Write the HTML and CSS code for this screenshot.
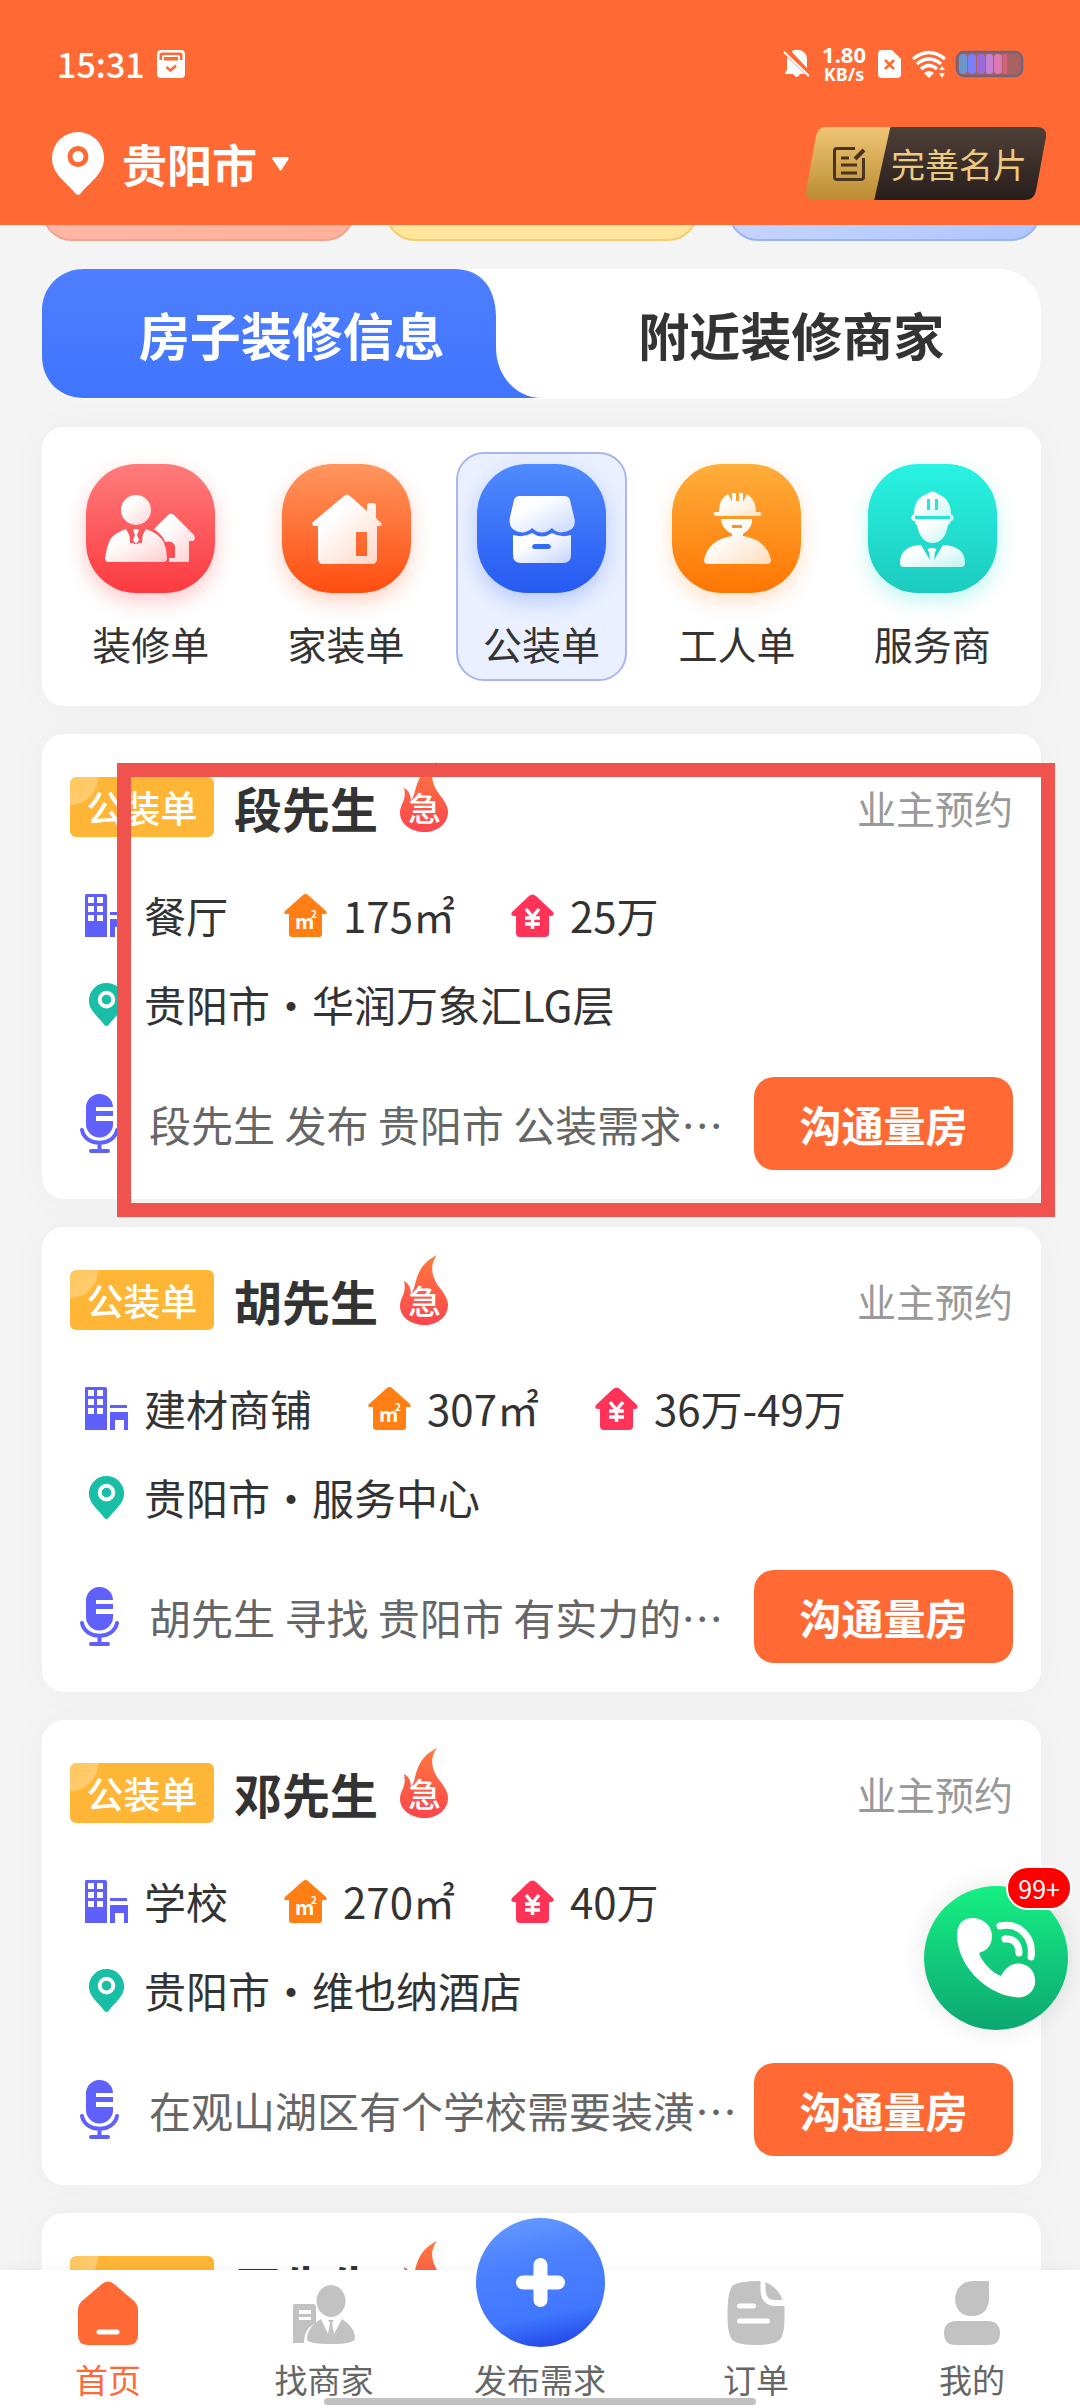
FILE: index.html
```html
<!DOCTYPE html>
<html lang="zh-CN">
<head>
<meta charset="utf-8">
<meta name="viewport" content="width=device-width, initial-scale=1">
<title>首页</title>
<link rel="stylesheet" href="styles.css">
</head>
<body>
<svg class="sprite" aria-hidden="true">
  <defs>
    <linearGradient id="g-red" x1="0" y1="0" x2="0" y2="1"><stop offset="0" stop-color="#ff7c7c"/><stop offset="1" stop-color="#fb3a40"/></linearGradient>
    <linearGradient id="g-orange" x1="0" y1="0" x2="0" y2="1"><stop offset="0" stop-color="#ff965f"/><stop offset="1" stop-color="#ff4d10"/></linearGradient>
    <linearGradient id="g-blue" x1="0" y1="0" x2="0" y2="1"><stop offset="0" stop-color="#4f8aff"/><stop offset="1" stop-color="#265af2"/></linearGradient>
    <linearGradient id="g-amber" x1="0" y1="0" x2="0" y2="1"><stop offset="0" stop-color="#ffae3b"/><stop offset="1" stop-color="#ff7603"/></linearGradient>
    <linearGradient id="g-teal" x1="0" y1="0" x2="0" y2="1"><stop offset="0" stop-color="#29f3e3"/><stop offset="1" stop-color="#1ccbbf"/></linearGradient>
    <linearGradient id="g-flame" x1="0" y1="0" x2="0" y2="1"><stop offset="0" stop-color="#ff7a3d"/><stop offset="1" stop-color="#fb454e"/></linearGradient>
    <linearGradient id="g-tab" x1="0" y1="0" x2="0" y2="1"><stop offset="0" stop-color="#4f7fff"/><stop offset="1" stop-color="#3f74fe"/></linearGradient>
    <linearGradient id="g-glyph" x1="0" y1="0" x2="1" y2="1"><stop offset=".3" stop-color="#fff"/><stop offset="1" stop-color="#fff" stop-opacity=".72"/></linearGradient>
  </defs>
  <symbol id="building" viewBox="0 0 43 43">
    <path fill="#5f5ffb" fill-rule="evenodd" d="M1 0H20Q22 0 22 2V43H0V2Q0 0 1 0ZM3 3V9H9V3ZM12 3V9H18V3ZM3 12V18H9V12ZM12 12V18H18V12ZM3 21V27H9V21ZM12 21V27H18V21ZM25 18H42V21H25ZM25 25H43V43H39V33H30V43H25Z"/>
  </symbol>
  <symbol id="area" viewBox="0 0 43 43">
    <path fill="#ff7f14" d="M19 1Q21.500-1 24 1L42 17Q44 20 41 20H38V40Q38 43 35 43H8Q5 43 5 40V20H2Q-1 20 1 17Z"/>
    <text x="11" y="35" font-size="20" font-weight="700" fill="#fff">m</text><text x="27" y="24" font-size="10" font-weight="700" fill="#fff">2</text>
  </symbol>
  <symbol id="budget" viewBox="0 0 43 43">
    <path fill="#ff3358" d="M18 2Q21.500-1 25 2L42 18Q44 22 40 22H38V39Q38 43 34 43H9Q5 43 5 39V22H3Q-1 22 1 18Z"/>
    <path stroke="#fff" stroke-width="3.500" fill="none" d="M15 15L21.500 23L28 15M14 24H29M14 30H29M21.500 23V35"/>
  </symbol>
  <symbol id="pin" viewBox="0 0 36 44">
    <path fill="#18bea6" fill-rule="evenodd" d="M18 0A18 18 0 0 1 36 18C36 28 27 34 20 43Q18 45 16 43C9 34 0 28 0 18A18 18 0 0 1 18 0ZM18 8A9 9 0 1 0 18 26A9 9 0 1 0 18 8ZM18 12A5 5 0 1 1 18 22A5 5 0 1 1 18 12Z"/>
  </symbol>
  <symbol id="mic" viewBox="0 0 39 59">
    <path fill="#6060fb" d="M6 14A13.500 13.500 0 0 1 33 13H16V17H33V22H16V27H33V30A13.500 13.500 0 0 1 6 30Z"/>
    <path fill="none" stroke="#6060fb" stroke-width="4" stroke-linecap="round" d="M2 36C5 53 34 53 37 36M19.500 49V55M11 57H28"/>
  </symbol>
  <symbol id="flame" viewBox="0 0 49 70">
    <path fill="url(#g-flame)" d="M37 0C30 9 31 19 37 29C43 37 48 43 48 50C48 62 37 70 25 70C11 70 0 62 0 51C0 42 7 39 4 26C9 28 11 34 11 39C18 30 13 12 37 0Z"/>
    <text x="8" y="59" font-size="33" font-weight="500" fill="#fff">急</text>
  </symbol>
</svg>

<div class="app">
  <header class="header">
    <div class="status">
      <span class="clock">15:31</span>
      <svg class="st-app" viewBox="0 0 28 28"><path fill="#fff" fill-rule="evenodd" d="M4 0H24Q28 0 28 4V24Q28 28 24 28H4Q0 28 0 24V4Q0 0 4 0ZM2.500 10H5V7Q5 5 7 5H21Q23 5 23 7V10H25.500V5Q25.500 2.500 23 2.500H5Q2.500 2.500 2.500 5ZM7 10.500H21V7H7Z"/><path d="M9.500 17L13.500 20.500L19 15.500" fill="none" stroke="#ff6a34" stroke-width="2.500"/></svg>
      <span class="spacer"></span>
      <svg class="st-bell" viewBox="0 0 26 28"><path fill="#fff" d="M8 1C14-2 23 1 23 9V18L8 2ZM3 7L21 24H16Q13 30 9 24H1Q1 22 3 20Z"/><path stroke="#fff" stroke-width="2" d="M0 2L25 26"/></svg>
      <span class="speed"><b>1.80</b><small>KB/s</small></span>
      <svg class="st-sim" viewBox="0 0 23 28"><path fill="#fff" d="M4 0H14L23 9V24Q23 28 19 28H4Q0 28 0 24V4Q0 0 4 0Z"/><path stroke="#ff6a34" stroke-width="2.500" d="M7 10L16 19M16 10L7 19"/></svg>
      <svg class="st-wifi" viewBox="0 0 34 27"><path fill="none" stroke="#fff" stroke-width="3.500" d="M1 8Q17-5 33 8M5 13Q17 3 29 13M9 18Q17 11 25 18"/><path fill="#fff" d="M12 22Q17 18 22 22L17 27ZM27 19L30 15L33 19ZM27 22L30 27L33 22Z"/></svg>
      <svg class="st-bat" viewBox="0 0 67 26"><rect x="1" y="1" width="65" height="24" rx="7" fill="#a9625f" stroke="#73647c" stroke-width="2.500"/><rect x="3" y="3" width="8" height="20" rx="4" fill="#6c96d0"/><rect x="12" y="3" width="8" height="20" rx="4" fill="#7a80ff"/><rect x="21" y="3" width="8" height="20" rx="4" fill="#9b6bdb"/><rect x="30" y="3" width="7" height="20" rx="3" fill="#c481d0"/><rect x="38" y="3" width="8" height="20" rx="4" fill="#df79b4"/><path fill="#d7607c" d="M47 3H51V23H47Z"/></svg>
    </div>
    <div class="topbar">
      <button class="city" type="button">
        <svg class="city-pin" viewBox="0 0 52 63"><path fill="#fff" fill-rule="evenodd" d="M26 0A26 26 0 0 1 52 26C52 42 38 50 29 61Q26 65 23 61C14 50 0 42 0 26A26 26 0 0 1 26 0ZM26 14A10.500 10.500 0 1 0 26 35A10.500 10.500 0 1 0 26 14Z"/><circle cx="26" cy="24.500" r="5.500" fill="#fff"/></svg>
        贵阳市
        <svg class="caret" viewBox="0 0 17 14"><path fill="#fff" d="M2 0H15Q18 0 16 3L10 12Q8.500 15 7 12L1 3Q-1 0 2 0Z"/></svg>
      </button>
      <button class="profile" type="button">
        <svg class="profile-bg" viewBox="0 0 239 73" preserveAspectRatio="none" aria-hidden="true"><defs><linearGradient id="pg" x1="0" y1="0" x2="0" y2="1"><stop offset="0" stop-color="#efc576"/><stop offset="1" stop-color="#bb8c32"/></linearGradient><linearGradient id="pd" x1="0" y1="0" x2="0" y2="1"><stop offset="0" stop-color="#503f38"/><stop offset="1" stop-color="#271e1c"/></linearGradient></defs><path fill="url(#pg)" d="M20 0H86L70 73H8Q-1 73 0 64L10 9Q12 0 20 0Z"/><path fill="url(#pd)" d="M84 0H230Q240 0 239 10L229 64Q227 73 218 73H68Z"/></svg>
        <svg class="profile-icon" viewBox="0 0 32 34"><path fill="none" stroke="#49351f" stroke-width="3" d="M22 1.500H4Q1.500 1.500 1.500 4V30Q1.500 32.500 4 32.500H28Q30.500 32.500 30.500 30V11M8 11H16M8 18H24M8 26H24"/><path stroke="#49351f" stroke-width="4" d="M22 12L31 3"/></svg>
        完善名片
      </button>
    </div>
  </header>

  <main class="content">
    <div class="promos"><div class="promo promo-red"></div><div class="promo promo-yellow"></div><div class="promo promo-blue"></div></div>

    <div class="tabs">
      <svg class="tab-bg" viewBox="0 0 999 130" preserveAspectRatio="none" aria-hidden="true"><path fill="url(#g-tab)" d="M42 0H412C440 0 454 20 454 48V78C454 108 475 129 500 129H42C18 129 0 112 0 87V42C0 18 18 0 42 0Z"/></svg>
      <button class="tab tab-active" type="button">房子装修信息</button>
      <button class="tab" type="button">附近装修商家</button>
    </div>

    <nav class="cats">
      <a class="cat" href="#renovate"><svg class="cat-icon cat-red" viewBox="0 0 129 129"><rect width="129" height="129" rx="50" fill="url(#g-red)"/><g fill="url(#g-glyph)"><path d="M68 65L82 51Q85 48 88 51L108 71Q110 75 107 77H103V98H83V94H89V82Q87 76 79 78Q77 71 68 65Z"/><circle cx="50" cy="46" r="15"/><path d="M40 65L48 80H52L60 65Q74 70 78 79Q81 86 81 94Q81 98 77 98H23Q19 98 19 94Q21 82 24 76Q28 69 40 65Z"/></g><path fill="#f9585c" d="M43 65H57L56 79H53L51 70H49L47 79H44Z"/><path fill="#fff" d="M47 66Q50 64 53 66L51 71L53 76L50 80L47 76L49 71Z"/></svg>装修单</a>
      <a class="cat" href="#home"><svg class="cat-icon cat-orange" viewBox="0 0 129 129"><rect width="129" height="129" rx="50" fill="url(#g-orange)"/><path fill="url(#g-glyph)" fill-rule="evenodd" d="M62 32Q65 29 68 32L85 47V42Q85 39 88 39H91Q94 39 94 42V54L100 60Q100 62 98 62H95V95Q95 100 90 100H41Q36 100 36 95V62H32Q29 61 31 58ZM74 68V92H85V68Z"/></svg>家装单</a>
      <a class="cat cat-active" href="#commercial" aria-current="true"><svg class="cat-icon cat-blue" viewBox="0 0 129 129"><rect width="129" height="129" rx="50" fill="url(#g-blue)"/><path fill="url(#g-glyph)" d="M43 32H87Q92 32 93 36L97 53Q100 64 91 67Q81 71 75 64Q65 73 55 64Q48 71 39 67Q31 64 33 53L37 36Q38 32 43 32Z"/><path fill="url(#g-glyph)" fill-rule="evenodd" d="M36 71Q47 74 55 69Q65 76 75 69Q84 74 94 71V91Q94 99 86 99H44Q36 99 36 91ZM57 80Q53 83 57 85H72Q76 83 72 80Z"/></svg>公装单</a>
      <a class="cat" href="#worker"><svg class="cat-icon cat-amber" viewBox="0 0 129 129"><rect width="129" height="129" rx="50" fill="url(#g-amber)"/><g fill="url(#g-glyph)"><path d="M47 48Q47 34 56 30L60 38V29H64V37H67V29H71V38L75 30Q84 36 84 48H88Q91 50 88 52H43Q40 50 43 48Z"/><path fill-rule="evenodd" d="M49 55H80Q81 64 71 70V72Q95 76 99 96Q99 100 95 100H36Q32 100 32 96Q36 76 60 72V70Q49 64 49 55ZM60 61V64H70V61Z"/></g></svg>工人单</a>
      <a class="cat" href="#provider"><svg class="cat-icon cat-teal" viewBox="0 0 129 129"><rect width="129" height="129" rx="50" fill="url(#g-teal)"/><g fill="url(#g-glyph)"><path fill-rule="evenodd" d="M46 50Q46 34 59 30Q64 25 70 30Q83 35 83 50Q88 53 84 57H82V52H47V57H45Q41 53 46 50ZM59 35V46H62V35ZM67 35V46H70V35Z"/><path d="M47 55H82Q84 58 80 61Q77 79 64 79Q52 78 49 61Q46 59 47 55Z"/><path d="M53 81L62 96L61 88Q58 85 62 84H66Q70 85 67 88L66 96L75 81Q97 82 97 99Q97 103 93 103H36Q32 103 32 99Q32 82 53 81Z"/></g></svg>服务商</a>
    </nav>

    <article class="lead">
      <div class="lead-head"><span class="tag">公装单</span><h2>段先生</h2><svg class="flame"><use href="#flame"/></svg><span class="source">业主预约</span></div>
      <div class="facts">
        <span class="fact"><svg class="ic"><use href="#building"/></svg>餐厅</span>
        <span class="fact"><svg class="ic"><use href="#area"/></svg>175㎡</span>
        <span class="fact"><svg class="ic"><use href="#budget"/></svg>25万</span>
      </div>
      <div class="place"><svg class="ic"><use href="#pin"/></svg>贵阳市・华润万象汇LG层</div>
      <div class="lead-foot"><svg class="mic"><use href="#mic"/></svg><p>段先生 发布 贵阳市 公装需求…</p><button class="cta" type="button">沟通量房</button></div>
      <div class="marker"></div>
    </article>

    <article class="lead">
      <div class="lead-head"><span class="tag">公装单</span><h2>胡先生</h2><svg class="flame"><use href="#flame"/></svg><span class="source">业主预约</span></div>
      <div class="facts">
        <span class="fact"><svg class="ic"><use href="#building"/></svg>建材商铺</span>
        <span class="fact"><svg class="ic"><use href="#area"/></svg>307㎡</span>
        <span class="fact"><svg class="ic"><use href="#budget"/></svg>36万-49万</span>
      </div>
      <div class="place"><svg class="ic"><use href="#pin"/></svg>贵阳市・服务中心</div>
      <div class="lead-foot"><svg class="mic"><use href="#mic"/></svg><p>胡先生 寻找 贵阳市 有实力的…</p><button class="cta" type="button">沟通量房</button></div>
    </article>

    <article class="lead">
      <div class="lead-head"><span class="tag">公装单</span><h2>邓先生</h2><svg class="flame"><use href="#flame"/></svg><span class="source">业主预约</span></div>
      <div class="facts">
        <span class="fact"><svg class="ic"><use href="#building"/></svg>学校</span>
        <span class="fact"><svg class="ic"><use href="#area"/></svg>270㎡</span>
        <span class="fact"><svg class="ic"><use href="#budget"/></svg>40万</span>
      </div>
      <div class="place"><svg class="ic"><use href="#pin"/></svg>贵阳市・维也纳酒店</div>
      <div class="lead-foot"><svg class="mic"><use href="#mic"/></svg><p>在观山湖区有个学校需要装潢…</p><button class="cta" type="button">沟通量房</button></div>
    </article>

    <article class="lead">
      <div class="lead-head"><span class="tag">公装单</span><h2>王先生</h2><svg class="flame"><use href="#flame"/></svg></div>
    </article>
  </main>

  <button class="call" type="button" aria-label="电话">
    <svg viewBox="0 0 144 144"><defs><linearGradient id="cg" x1="0" y1="0" x2="0" y2="1"><stop offset="0" stop-color="#16f083"/><stop offset="1" stop-color="#0da673"/></linearGradient></defs><circle cx="72" cy="72" r="72" fill="url(#cg)"/><path fill="#fff" d="M42 33C55 29 68 38 68 50C68 60 62 65 55 67C58 76 68 87 77 90C82 80 91 76 98 78C108 80 112 89 111 98C109 107 101 113 90 111C60 107 33 78 33 49Q33 37 42 33Z"/><path fill="none" stroke="#fff" stroke-width="7" stroke-linecap="round" d="M76 40C95 36 110 51 107 71M81 53C90 52 95 58 95 67"/></svg>
    <span class="count">99+</span>
  </button>

  <nav class="tabbar">
    <a class="item item-active" href="#index"><svg viewBox="0 0 60 64"><path fill="#ff6a34" d="M24 3Q30-2 36 3L56 20Q60 24 60 29V54Q60 64 50 64H10Q0 64 0 54V29Q0 24 4 20Z"/><path stroke="#fff" stroke-width="5" stroke-linecap="round" d="M21 51H39"/></svg>首页</a>
    <a class="item" href="#merchants"><svg viewBox="0 0 62 64"><path fill="#c2c2c2" fill-rule="evenodd" d="M2 23H20Q23 23 23 26V42Q11 47 11 62H0V25Q0 23 2 23ZM6 29V33H18V29ZM6 36V39H18V36Z"/><ellipse cx="38" cy="20" rx="14.500" ry="16" fill="#c2c2c2"/><path fill="#c2c2c2" d="M28 38L35 53L37 42L35 39H41L39 42L41 53L49 38C57 43 62 50 62 57Q62 63 38 63Q14 63 14 58C14 50 20 42 28 38Z"/></svg>找商家</a>
    <a class="item item-publish" href="#publish"><svg class="plus" viewBox="0 0 129 129"><defs><linearGradient id="plg" x1=".4" y1="0" x2=".6" y2="1"><stop offset="0" stop-color="#6397ff"/><stop offset=".3" stop-color="#4c82ff"/><stop offset=".75" stop-color="#4077ff"/><stop offset="1" stop-color="#2248e8"/></linearGradient></defs><circle cx="64.500" cy="64.500" r="64.500" fill="url(#plg)"/><path stroke="#fff" stroke-width="14" stroke-linecap="round" d="M64.500 47V82M47 64.500H82"/></svg>发布需求</a>
    <a class="item" href="#orders"><svg viewBox="0 0 57 64"><path fill="#c2c2c2" d="M33 0V10Q34 25 48 25H57V38Q57 54 52 59Q47 64 28 64Q10 64 5 59Q0 54 0 34Q0 10 5 5Q10 0 33 0ZM38 1Q51 7 55 19H48Q38 19 38 9Z"/><path stroke="#fff" stroke-width="5" stroke-linecap="round" d="M12 25H26M12 40H40"/></svg>订单</a>
    <a class="item" href="#me"><svg viewBox="0 0 56 64"><path fill="#c2c2c2" d="M28 0H45V19Q43 35 28 35Q12 35 11 18Q12 2 28 0ZM11 40H45Q56 41 56 52Q56 64 45 64H11Q0 64 0 52Q0 41 11 40Z"/></svg>我的</a>
    <span class="handle"></span>
  </nav>
</div>
</body>
</html>
```
FILE: styles.css
```css
* { box-sizing: border-box; }

body {
  margin: 0;
  background: #f4f4f5;
  color: #333;
  font-family: "Noto Sans CJK SC", "Noto Sans", sans-serif;
  font-size: 42px;
  line-height: 60px;
}

button {
  border: 0;
  padding: 0;
  background: none;
  color: inherit;
  font: inherit;
  cursor: pointer;
}

a { color: inherit; text-decoration: none; }

svg { display: block; flex: none; overflow: visible; }

h2, p { margin: 0; }

.sprite { position: absolute; width: 0; height: 0; }

.app {
  position: relative;
  display: flex;
  flex-direction: column;
  height: 100vh;
  overflow: hidden;
}

/* Header */
.header {
  position: relative;
  z-index: 1;
  flex: none;
  padding: 40px 34px 25px 52px;
  background: #ff6a34;
  color: #fff;
}

.status {
  display: flex;
  align-items: center;
  height: 48px;
  padding: 0 23px 0 5px;
}

.clock { width: 100px; font-size: 34px; font-weight: 500; line-height: 48px; }
.st-app { width: 28px; height: 28px; }
.spacer { flex: 1; }
.st-bell { width: 26px; height: 28px; }

.speed {
  display: flex;
  flex-direction: column;
  align-items: center;
  margin: 0 12px;
  font-family: "Noto Sans", sans-serif;
}

.speed b { font-size: 22px; font-weight: 700; line-height: 20px; }
.speed small { font-size: 18px; font-weight: 700; line-height: 20px; }
.st-sim { width: 23px; height: 28px; margin-right: 11px; }
.st-wifi { width: 34px; height: 27px; margin-right: 10px; }
.st-bat { width: 67px; height: 26px; }

.topbar {
  display: flex;
  align-items: center;
  justify-content: space-between;
  margin-top: 39px;
}

.city {
  display: flex;
  align-items: center;
  font-size: 45px;
  font-weight: 700;
}

.city-pin { width: 52px; height: 63px; margin-right: 18px; }
.caret { width: 17px; height: 14px; margin-left: 15px; }

.profile {
  position: relative;
  display: flex;
  align-items: center;
  gap: 26px;
  height: 73px;
  padding: 0 19px 0 27px;
  color: #edca80;
  font-size: 34px;
}

.profile-bg { position: absolute; inset: 0; z-index: -1; width: 100%; height: 100%; }
.profile-icon { width: 32px; height: 34px; }

/* Scrolling content */
.content {
  display: flex;
  flex: 1;
  flex-direction: column;
  gap: 28px;
  min-height: 0;
  padding: 0 39px 0 42px;
  overflow: hidden;
}

.content > * { flex: none; }

.promos {
  display: grid;
  grid-template-columns: repeat(3, 1fr);
  gap: 30px;
  height: 60px;
  margin-top: -44px;
}

.promo { border: 2px solid; border-radius: 30px; }
.promo-red { border-color: #f0a48e; background: linear-gradient(90deg, #ffb8a5, #ffb09a); }
.promo-yellow { border-color: #f5cd6c; background: #ffe69c; }
.promo-blue { border-color: #97b5f2; background: linear-gradient(90deg, #c5d4fd, #aec6ff); }

.tabs {
  position: relative;
  display: grid;
  grid-template-columns: 1fr 1fr;
  height: 130px;
  border-radius: 42px;
  background: #fff;
}

.tab-bg { position: absolute; inset: 0; width: 100%; height: 100%; }
.tab { position: relative; font-size: 51px; font-weight: 700; }
.tab-active { color: #fff; }

.cats {
  display: grid;
  grid-template-columns: repeat(5, 1fr);
  padding: 25px 11px;
  border-radius: 22px;
  background: #fff;
  box-shadow: 0 0 40px rgba(0, 0, 0, .03);
}

.cat {
  display: flex;
  flex-direction: column;
  align-items: center;
  gap: 20px;
  height: 229px;
  margin: 0 12px;
  padding-top: 10px;
  border: 2px solid transparent;
  border-radius: 28px;
  font-size: 39px;
}

.cat-active { border-color: #a9b6ef; background: #eaf0ff; }
.cat-icon { width: 129px; height: 129px; border-radius: 50px; }
.cat-red { box-shadow: 0 8px 20px rgba(251, 58, 64, .28); }
.cat-orange { box-shadow: 0 8px 20px rgba(255, 77, 16, .25); }
.cat-blue { box-shadow: 0 8px 20px rgba(38, 90, 242, .25); }
.cat-amber { box-shadow: 0 8px 20px rgba(255, 118, 3, .22); }
.cat-teal { box-shadow: 0 8px 20px rgba(28, 225, 210, .28); }

/* Lead cards */
.lead {
  position: relative;
  height: 465px;
  padding: 28px;
  border-radius: 22px;
  background: #fff;
  box-shadow: 0 0 40px rgba(0, 0, 0, .03);
}

.lead-head { display: flex; align-items: center; height: 90px; }

.tag {
  width: 144px;
  border-radius: 6px;
  background: radial-gradient(circle at 0 0, #ffc65c 0, #ffcb6e 27px, #ffb636 29px);
  color: #fff;
  font-size: 37px;
  font-weight: 500;
  text-align: center;
}

.lead-head h2 { margin: 0 22px 0 20px; font-size: 48px; font-weight: 700; }
.flame { align-self: flex-start; width: 49px; height: 70px; }
.source { margin-left: auto; color: #999; font-size: 39px; }

.facts { display: flex; gap: 56px; margin: 33px 0 29px; padding-left: 15px; }
.fact, .place { display: flex; align-items: center; gap: 16px; }
.place { padding-left: 15px; }
.ic { width: 43px; height: 43px; }

.lead-foot { display: flex; align-items: center; margin-top: 43px; padding-left: 10px; }
.mic { width: 39px; height: 59px; margin-right: 30px; }
.lead-foot p { flex: 1; min-width: 0; overflow: hidden; color: #666; white-space: nowrap; }

.cta {
  width: 259px;
  height: 93px;
  border-radius: 20px;
  background: #ff6a34;
  color: #fff;
  font-weight: 700;
}

.marker {
  position: absolute;
  inset: 29px -14px -18px 75px;
  z-index: 1;
  border: 14px solid #f0534e;
  pointer-events: none;
}

/* Floating call button */
.call {
  position: absolute;
  right: 12px;
  bottom: 378px;
  z-index: 1;
  width: 144px;
  height: 144px;
  border-radius: 50%;
  box-shadow: 0 0 24px rgba(0, 0, 0, .1);
}

.count {
  position: absolute;
  top: -20px;
  right: -4px;
  padding: 0 10px;
  border: 2px solid #fff;
  border-radius: 22px;
  background: #f00;
  color: #fff;
  font-size: 25px;
  line-height: 40px;
}

/* Bottom navigation */
.tabbar {
  position: relative;
  z-index: 1;
  display: grid;
  flex: none;
  grid-template-rows: 100%;
  grid-template-columns: repeat(5, 1fr);
  height: 138px;
  background: #fff;
  box-shadow: 0 0 12px rgba(0, 0, 0, .05);
}

.item {
  display: flex;
  flex-direction: column;
  align-items: center;
  justify-content: flex-end;
  gap: 10px;
  padding-bottom: 5px;
  color: #666;
  font-size: 33px;
  line-height: 48px;
}

.item svg { width: 62px; height: 64px; }
.item-active { color: #ff6a34; }
.item-publish { gap: 8px; }
.item .plus { width: 129px; height: 129px; }

.handle {
  position: absolute;
  bottom: 3px;
  left: 30%;
  width: 40%;
  height: 7px;
  border-radius: 4px;
  background: #c1c1c1;
}
```
